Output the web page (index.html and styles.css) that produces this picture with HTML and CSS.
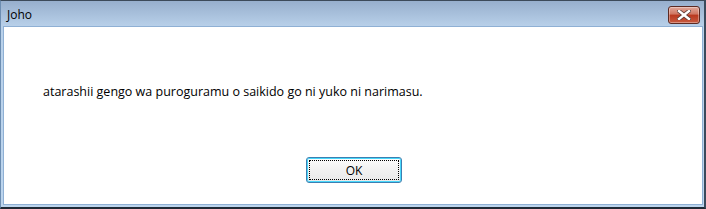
FILE: index.html
```html
<!DOCTYPE html>
<html>
<head>
    <title>Joho</title>
    <link rel="stylesheet" href="styles.css">
</head>
<body>
    <div class="window">
        <div class="titlebar">
            <span class="title">Joho</span>
            <button class="close" type="button">
                <svg width="14" height="10" viewBox="0 0 14 10">
                    <path d="M2 1 L12 9 M12 1 L2 9" stroke="#5a3a36" stroke-width="4" stroke-linecap="square"/>
                    <path d="M2 1 L12 9 M12 1 L2 9" stroke="#ffffff" stroke-width="2.4" stroke-linecap="square"/>
                </svg>
            </button>
        </div>
        <div class="client">
            <p class="message">atarashii gengo wa puroguramu o saikido go ni yuko ni narimasu.</p>
            <div class="buttons">
                <button class="ok" type="button"><span>OK</span></button>
            </div>
        </div>
    </div>
</body>
</html>
```

FILE: styles.css
```css
body{
    margin: 0;
    background: #2b2b2b;
    font-family: "Open Sans", "Noto Sans", sans-serif;
    font-size: 12px;
}

.window{
    width: 706px;
    height: 209px;
    box-sizing: border-box;
    display: flex;
    flex-direction: column;
    background: linear-gradient(#97afcd, #b9d1ea 26px, #bcd5ee);
    border-top: 1px solid #3c4a5a;
    border-left: 1px solid #6d8eb2;
    border-right: 2px solid #3a4a5c;
    border-bottom: 2px solid #1f2a36;
}

.titlebar{
    height: 25px;
    display: flex;
    align-items: center;
    justify-content: space-between;
    padding: 0 4px 0 6px;
}

.title{
    color: #000;
    font-size: 12px;
    padding-top: 1px;
}

.close{
    width: 32px;
    height: 18px;
    margin-top: 2px;
    padding: 0;
    border: 1px solid #5c2a22;
    border-radius: 3px;
    background: linear-gradient(#e2a89a, #cf7560 45%, #b9381e 50%, #c75a40);
    box-shadow: inset 0 0 0 1px rgba(255,255,255,0.35);
    display: flex;
    align-items: center;
    justify-content: center;
}

.client{
    flex: 1;
    margin: 0 1px 2px 2px;
    background: #fff;
    border: 1px solid #8fb0d4;
    display: flex;
    flex-direction: column;
}

.message{
    margin: 0;
    padding: 56px 0 0 39px;
    color: #000;
    font-size: 12.5px;
    height: 74px;
}

.buttons{
    display: flex;
    justify-content: center;
}

.ok{
    width: 96px;
    height: 26px;
    margin-left: 2px;
    padding: 2px;
    border: 1px solid #3c7fb1;
    border-radius: 3px;
    background: linear-gradient(#fdfdfd, #f1f1f1 50%, #e9e9e9);
    box-shadow: inset 0 0 0 1px #48d8fb;
    font-family: "Open Sans", "Noto Sans", sans-serif;
    font-size: 12px;
    color: #000;
}

.ok span{
    display: flex;
    align-items: center;
    justify-content: center;
    height: 100%;
    border: 1px dotted #000;
    box-sizing: border-box;
}
```
